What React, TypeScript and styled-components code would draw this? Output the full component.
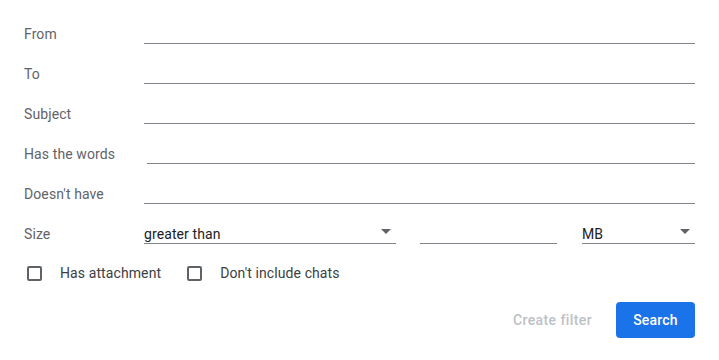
import React from 'react'
import styled, { createGlobalStyle } from 'styled-components'

const GlobalStyle = createGlobalStyle`
	html, body {
		margin: 0;
		padding: 0;
		background: #ffffff;
	}
	body {
		font-family: Roboto, "Noto Sans", Arial, sans-serif;
		font-size: 14px;
		letter-spacing: 0.1px;
		color: #202124;
	}
`

const Panel = styled.form`
	width: 719px;
	height: 360px;
	box-sizing: border-box;
	padding: 4px 24px 0 24px;
	display: flex;
	flex-direction: column;
`

const Row = styled.div`
	display: flex;
	align-items: flex-end;
	height: 40px;
`

const Label = styled.label`
	width: 120px;
	flex: none;
	color: #5f6368;
	line-height: 18px;
	padding-bottom: 1px;
`

const TextInput = styled.input<{ $inset?: number }>`
	flex: 1;
	min-width: 0;
	height: 24px;
	margin-left: ${p => p.$inset ?? 0}px;
	border: none;
	border-bottom: 1px solid #80868b;
	padding: 0;
	font: inherit;
	color: #202124;
	outline: none;
	background: transparent;
`

const SelectBox = styled.div<{ $width: number }>`
	position: relative;
	width: ${p => p.$width}px;
	flex: none;
	height: 24px;
	border-bottom: 1px solid #80868b;
	display: flex;
	align-items: flex-end;
	color: #202124;
	line-height: 18px;
`

const Arrow = styled.span`
	position: absolute;
	right: 5px;
	top: 10px;
	width: 0;
	height: 0;
	border-left: 5px solid transparent;
	border-right: 5px solid transparent;
	border-top: 5px solid #5f6368;
`

const SizeInput = styled(TextInput)`
	flex: none;
	width: 137px;
	margin: 0 25px 0 24px;
`

const CheckRow = styled.div`
	display: flex;
	align-items: center;
	height: 20px;
	margin-top: 19px;
	padding-left: 3px;
`

const CheckItem = styled.label`
	display: flex;
	align-items: center;
	color: #3c4043;
	margin-right: 26px;
	line-height: 20px;
`

const Box = styled.span`
	width: 11px;
	height: 11px;
	border: 2px solid #5f6368;
	border-radius: 2px;
	margin-right: 18px;
	flex: none;
`

const Actions = styled.div`
	display: flex;
	justify-content: flex-end;
	align-items: center;
	margin-top: 19px;
`

const TextButton = styled.button`
	border: none;
	background: transparent;
	font: inherit;
	font-weight: 500;
	color: #bdc1c6;
	padding: 0 12px;
	height: 36px;
	margin-right: 12px;
	letter-spacing: 0.4px;
`

const PrimaryButton = styled.button`
	border: none;
	background: #1a73e8;
	color: #ffffff;
	font: inherit;
	font-weight: 500;
	height: 36px;
	width: 79px;
	border-radius: 4px;
	letter-spacing: 0.2px;
`

const fields = ['From', 'To', 'Subject', 'Has the words', "Doesn't have"]

export default function App() {
	return (
		<>
			<GlobalStyle />
			<Panel onSubmit={e => e.preventDefault()}>
				{fields.map(name => (
					<Row key={name}>
						<Label>{name}</Label>
						<TextInput $inset={name === 'Has the words' ? 3 : 0} />
					</Row>
				))}
				<Row>
					<Label>Size</Label>
					<SelectBox $width={252}>
						greater than
						<Arrow />
					</SelectBox>
					<SizeInput />
					<SelectBox $width={113}>
						MB
						<Arrow />
					</SelectBox>
				</Row>
				<CheckRow>
					<CheckItem>
						<Box />
						Has attachment
					</CheckItem>
					<CheckItem>
						<Box />
						Don't include chats
					</CheckItem>
				</CheckRow>
				<Actions>
					<TextButton type="button" disabled>
						Create filter
					</TextButton>
					<PrimaryButton type="submit">Search</PrimaryButton>
				</Actions>
			</Panel>
		</>
	)
}
